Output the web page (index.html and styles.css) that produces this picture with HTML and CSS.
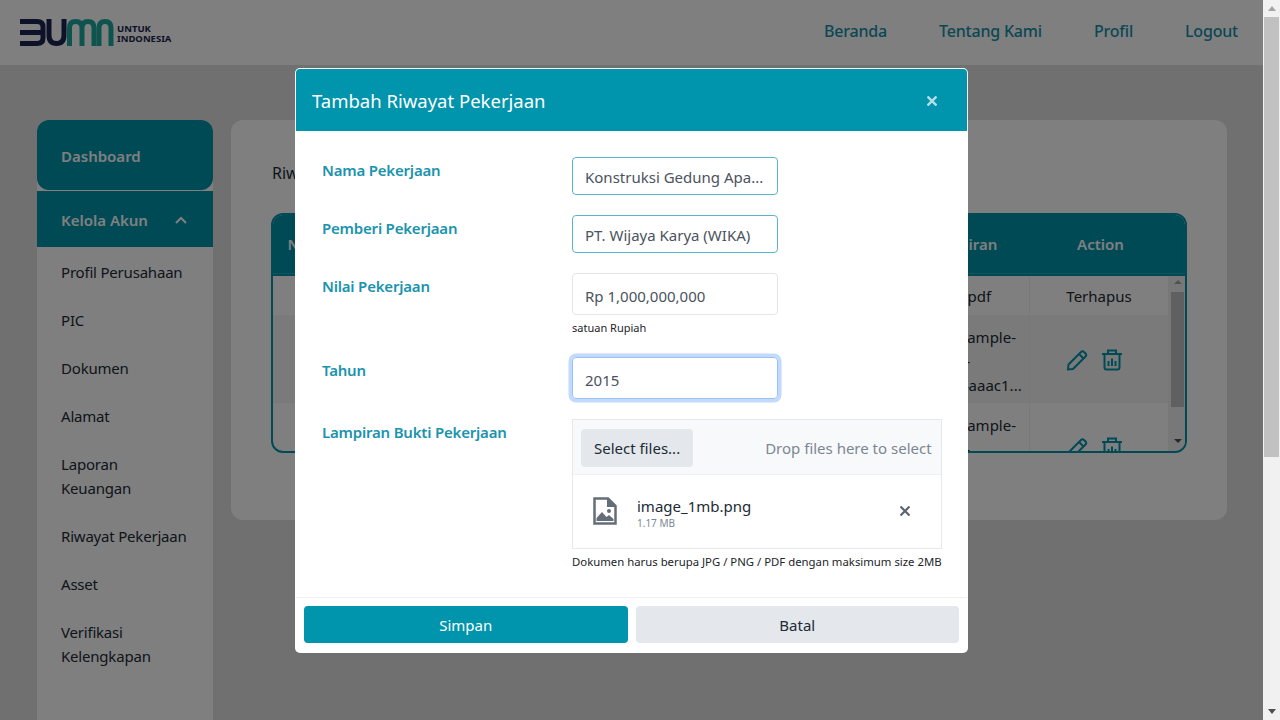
FILE: index.html
```html
<!DOCTYPE html>
<html lang="id">

<head>
    <meta charset="UTF-8">
    <title>Riwayat Pekerjaan</title>
    <link rel="stylesheet" href="styles.css">
</head>

<body>
    <div class="screen">
        <nav class="navbar">
            <svg class="logo-mark" width="94" height="28" viewBox="20 18 94 28" fill="none" stroke-width="5">
                <path stroke="#1a2550" d="M20 20.5H37Q43 20.5 43 26V37Q43 42.5 37 42.5H20M20 31.5H43" />
                <path stroke="#1a2550" d="M49 18V34Q49 42.5 56.500 42.500Q64 42.500 64 34V18" />
                <path stroke="#1fa79f" d="M69.500 45V27Q69.500 20.500 75.500 20.500Q82 20.500 82 27V45M82 27Q82 20.500 88 20.500Q94 20.500 94 27V45" />
                <path stroke="#1fa79f" d="M99 45V27Q99 20.500 105 20.500Q111 20.500 111 27V45" />
            </svg>
            <div class="logo-text">UNTUK<br>INDONESIA</div>
            <div class="nav-links">
                <a href="#">Beranda</a>
                <a href="#">Tentang Kami</a>
                <a href="#">Profil</a>
                <a href="#">Logout</a>
            </div>
        </nav>

        <main class="content">
            <aside class="sidebar">
                <div class="side-dash">Dashboard</div>
                <div class="side-group">
                    Kelola Akun
                    <svg width="12" height="8" viewBox="0 0 12 8" fill="none" stroke="#ffffff" stroke-width="2">
                        <path d="M1 7L6 2L11 7" />
                    </svg>
                </div>
                <a class="side-item" href="#">Profil Perusahaan</a>
                <a class="side-item" href="#">PIC</a>
                <a class="side-item" href="#">Dokumen</a>
                <a class="side-item" href="#">Alamat</a>
                <a class="side-item" href="#">Laporan Keuangan</a>
                <a class="side-item" href="#">Riwayat Pekerjaan</a>
                <a class="side-item" href="#">Asset</a>
                <a class="side-item" href="#">Verifikasi Kelengkapan</a>
            </aside>

            <section class="card">
                <h4 class="card-title">Riwayat Pekerjaan</h4>
                <div class="table-box">
                    <div class="tbl-row tbl-head">
                        <div>No</div>
                        <div>Nama Pekerjaan</div>
                        <div>Pemberi Pekerjaan</div>
                        <div>Nilai</div>
                        <div>Tahun</div>
                        <div>Lampiran</div>
                        <div>Action</div>
                    </div>
                    <div class="tbl-body">
                        <div class="tbl-rows">
                            <div class="tbl-row">
                                <div class="cell-no">1</div>
                                <div>Konstruksi</div>
                                <div>PT. Wijaya Karya</div>
                                <div>1,000,000</div>
                                <div>2015</div>
                                <div class="cell-file cell-file-sm">1.pdf</div>
                                <div class="cell-action">Terhapus</div>
                            </div>
                            <div class="tbl-row tbl-row-alt">
                                <div class="cell-no">2</div>
                                <div>Konstruksi</div>
                                <div>PT. Wijaya Karya</div>
                                <div>1,000,000</div>
                                <div>2016</div>
                                <div class="cell-file">sample-<br>f-<br>4aaac1...</div>
                                <div class="cell-action cell-icons">
                                    <svg width="22" height="22" viewBox="0 0 22 22" fill="none" stroke="#0094ad" stroke-width="2">
                                        <path d="M2 20.500L2.500 15.500L15 3Q16.500 1.500 18 3L19.500 4.500Q21 6 19.500 7.500L7 20Z" />
                                        <path d="M13 5L17.500 9.500" />
                                    </svg>
                                    <svg width="22" height="22" viewBox="0 0 22 22" fill="none" stroke="#0094ad" stroke-width="2">
                                        <path d="M1 5H21M7 5V1.500H15V5M3.500 5V18.500Q3.500 20.500 5.500 20.500H16.500Q18.500 20.500 18.500 18.500V5" />
                                        <path d="M7.500 12V17M11 9.500V17M14.500 12V17" />
                                    </svg>
                                </div>
                            </div>
                            <div class="tbl-row">
                                <div class="cell-no">3</div>
                                <div>Konstruksi</div>
                                <div>PT. Wijaya Karya</div>
                                <div>1,000,000</div>
                                <div>2017</div>
                                <div class="cell-file">sample-<br>f-<br>4aaac1...</div>
                                <div class="cell-action cell-icons">
                                    <svg width="22" height="22" viewBox="0 0 22 22" fill="none" stroke="#0094ad" stroke-width="2">
                                        <path d="M2 20.500L2.500 15.500L15 3Q16.500 1.500 18 3L19.500 4.500Q21 6 19.500 7.500L7 20Z" />
                                        <path d="M13 5L17.500 9.500" />
                                    </svg>
                                    <svg width="22" height="22" viewBox="0 0 22 22" fill="none" stroke="#0094ad" stroke-width="2">
                                        <path d="M1 5H21M7 5V1.500H15V5M3.500 5V18.500Q3.500 20.500 5.500 20.500H16.500Q18.500 20.500 18.500 18.500V5" />
                                        <path d="M7.500 12V17M11 9.500V17M14.500 12V17" />
                                    </svg>
                                </div>
                            </div>
                        </div>
                        <div class="tbl-scroll">
                            <span class="arrow-up"></span>
                            <span class="tbl-thumb"></span>
                            <span class="arrow-down"></span>
                        </div>
                    </div>
                </div>
            </section>
        </main>

        <div class="backdrop"></div>

        <div class="modal">
            <header class="modal-head">
                <span class="modal-title">Tambah Riwayat Pekerjaan</span>
                <svg class="modal-close" width="10" height="10" viewBox="0 0 10 10" stroke="#ffffff" stroke-width="2.400">
                    <path d="M0.500 0.500L9.500 9.500M9.500 0.500L0.500 9.500" />
                </svg>
            </header>

            <form class="modal-body">
                <div class="form-row row-name">
                    <label>Nama Pekerjaan</label>
                    <div class="field">
                        <div class="input input-ok">Konstruksi Gedung Apa...</div>
                    </div>
                </div>
                <div class="form-row row-giver">
                    <label>Pemberi Pekerjaan</label>
                    <div class="field">
                        <div class="input input-ok">PT. Wijaya Karya (WIKA)</div>
                    </div>
                </div>
                <div class="form-row row-value">
                    <label>Nilai Pekerjaan</label>
                    <div class="field">
                        <div class="input input-tall">Rp 1,000,000,000</div>
                        <small class="hint">satuan Rupiah</small>
                    </div>
                </div>
                <div class="form-row row-year">
                    <label>Tahun</label>
                    <div class="field">
                        <div class="input input-tall input-focus">2015</div>
                    </div>
                </div>
                <div class="form-row">
                    <label>Lampiran Bukti Pekerjaan</label>
                    <div class="field field-wide">
                        <div class="upload">
                            <div class="upload-bar">
                                <span class="upload-btn">Select files...</span>
                                <span class="upload-drop">Drop files here to select</span>
                            </div>
                            <div class="upload-file">
                                <svg class="file-icon" width="24" height="28" viewBox="0 0 24 28">
                                    <path fill="none" stroke="#656d78" stroke-width="2.500" d="M1.500 1.500H15L22.500 9V26.500H1.500Z" />
                                    <path fill="#656d78" d="M14 1.500H16L23 8.500V10H14Z" />
                                    <circle fill="#656d78" cx="16" cy="14" r="2" />
                                    <path fill="#656d78" d="M3.500 24V21L9 15L13.500 20L16 18L20.500 22V24Z" />
                                </svg>
                                <div class="file-info">
                                    <div class="file-name">image_1mb.png</div>
                                    <div class="file-size">1.17 MB</div>
                                </div>
                                <svg class="file-remove" width="10" height="10" viewBox="0 0 10 10" stroke="#5c6570" stroke-width="2.200">
                                    <path d="M0.500 0.500L9.500 9.500M9.500 0.500L0.500 9.500" />
                                </svg>
                            </div>
                        </div>
                        <small class="hint hint-wide">Dokumen harus berupa JPG / PNG / PDF dengan maksimum size 2MB</small>
                    </div>
                </div>
            </form>

            <footer class="modal-foot">
                <button type="button" class="btn btn-save">Simpan</button>
                <button type="button" class="btn btn-cancel">Batal</button>
            </footer>
        </div>
    </div>

    <div class="page-scroll">
        <span class="page-up"></span>
        <span class="page-thumb"></span>
        <span class="page-down"></span>
    </div>
</body>

</html>
```

FILE: styles.css
```css
* {
    box-sizing: border-box;
}

body {
    display: flex;
    margin: 0;
    height: 720px;
    overflow: hidden;
    font-family: "Noto Sans", "Open Sans", sans-serif;
    font-size: 15px;
    line-height: 24px;
    color: #212b36;
}

a {
    color: inherit;
    text-decoration: none;
}

.screen {
    position: relative;
    width: 1263px;
    height: 720px;
    overflow: hidden;
    background: #e0e0e0;
}

/* navbar */
.navbar {
    display: flex;
    align-items: center;
    height: 65px;
    padding: 0 25px 0 20px;
    background: #ffffff;
}

.logo-text {
    margin-left: 3px;
    margin-top: 2px;
    font-size: 9.500px;
    font-weight: 700;
    line-height: 9.500px;
    color: #1a2550;
}

.nav-links {
    display: flex;
    gap: 52px;
    margin-left: auto;
    margin-bottom: 4px;
    font-size: 16px;
    font-weight: 500;
    letter-spacing: -0.2px;
    color: #168fa8;
}

/* sidebar + card */
.content {
    display: flex;
    align-items: flex-start;
    gap: 18px;
    padding: 55px 0 0 37px;
}

.sidebar {
    width: 176px;
    height: 640px;
    background: #ffffff;
    border-radius: 12px 12px 0 0;
}

.side-dash {
    height: 70px;
    padding: 24px 24px 0;
    border-radius: 12px;
    background: #0094ad;
    color: #ffffff;
    font-weight: 600;
}

.side-group {
    display: flex;
    align-items: center;
    justify-content: space-between;
    height: 56px;
    margin-top: 1px;
    padding: 2px 26px 0 24px;
    background: #0094ad;
    color: #ffffff;
    font-weight: 600;
}

.side-item {
    display: block;
    padding: 13px 24px 11px;
    letter-spacing: -0.2px;
}

.card {
    width: 996px;
    height: 400px;
    padding: 40px;
    border-radius: 12px;
    background: #ffffff;
}

.card-title {
    margin: 0 0 27px 1px;
    font-size: 16px;
    font-weight: 400;
    line-height: 26px;
}

/* table */
.table-box {
    height: 240px;
    overflow: hidden;
    border: 2px solid #0094ad;
    border-radius: 12px;
}

.tbl-row {
    display: grid;
    grid-template-columns: 50px 200px 180px 100px 93px 133px 139px;
}

.tbl-row>div {
    padding: 8px 10px 7px;
}

.tbl-row .cell-no {
    padding-left: 30px;
}

.tbl-head {
    grid-template-columns: 50px 200px 180px 100px 93px 133px 143px;
    height: 59px;
    border-bottom: 1px solid #22a4ba;
    background: #0094ad;
    color: #ffffff;
    font-weight: 600;
    text-align: center;
}

.tbl-row.tbl-head>div {
    padding-top: 17px;
}

.tbl-body {
    display: flex;
    border-top: 2px solid #0094ad;
    height: 177px;
    overflow: hidden;
}

.tbl-rows {
    width: 895px;
}

.tbl-row-alt {
    background: #f5f5f5;
}

.tbl-row .cell-file {
    padding: 10px 0 6px 64px;
    overflow: hidden;
}

.tbl-row .cell-file-sm {
    padding: 8px 0 7px 59px;
}

.tbl-row .cell-action {
    display: flex;
    align-items: center;
    justify-content: center;
    gap: 13px;
    border-left: 1px solid #f0f0f0;
}

.tbl-row .cell-icons {
    padding-right: 19px;
}

.tbl-scroll {
    display: flex;
    flex-direction: column;
    align-items: center;
    justify-content: space-between;
    width: 17px;
    padding: 4px 0 8px 2px;
    background: #f1f1f1;
}

.tbl-thumb {
    width: 13px;
    height: 115px;
    margin-top: -1px;
    margin-bottom: 24px;
    background: #c1c1c1;
}

.arrow-up,
.arrow-down {
    width: 0;
    height: 0;
    border-left: 4px solid transparent;
    border-right: 4px solid transparent;
}

.arrow-up {
    border-bottom: 4px solid #a3a3a3;
}

.arrow-down {
    border-top: 4px solid #505050;
}

/* modal */
.backdrop {
    position: absolute;
    inset: 0;
    background: rgba(0, 0, 0, 0.5);
}

.modal {
    position: absolute;
    top: 68px;
    left: 295px;
    width: 673px;
    height: 585px;
    overflow: hidden;
    border: 1px solid rgba(255, 255, 255, 0.7);
    border-radius: 5px;
    background: #ffffff;
}

.modal-head {
    display: flex;
    align-items: center;
    justify-content: space-between;
    height: 62px;
    padding: 2px 30px 0 16px;
    background: #0094ad;
    color: #ffffff;
}

.modal-title {
    font-size: 18.500px;
    font-weight: 400;
}

.modal-close {
    opacity: 0.7;
}

.modal-body {
    height: 466px;
    padding: 26px 26px 0;
}

.form-row {
    display: flex;
}

.form-row label {
    width: 250px;
    flex: none;
    padding-top: 1px;
    color: #1a93ad;
    font-weight: 600;
    letter-spacing: -0.2px;
}

.field {
    width: 206px;
}

.field-wide {
    width: 370px;
}

.row-name {
    margin-bottom: 20px;
}

.row-giver {
    margin-bottom: 20px;
}

.row-value {
    margin-bottom: 21px;
}

.row-year {
    margin-bottom: 20px;
}

.input {
    height: 38px;
    padding: 7px 12px;
    border: 1px solid #58b7c7;
    border-radius: 4px;
    color: #4a5360;
    white-space: nowrap;
}

.input-tall {
    height: 42px;
    padding: 10px 12px 8px;
    border-color: #e2e6ea;
}

.input-focus {
    border-color: #9bc0f5;
    box-shadow: 0 0 0 3.500px #c2dafc;
}

.hint {
    display: block;
    color: #212529;
    font-size: 11px;
    line-height: 16px;
    margin-top: 5px;
    white-space: nowrap;
}

.hint-wide {
    font-size: 11.350px;
}

/* upload widget */
.upload {
    height: 130px;
    border: 1px solid #e6e8eb;
}

.upload-bar {
    display: flex;
    align-items: center;
    justify-content: space-between;
    height: 55px;
    padding: 2px 9px 0 8px;
    border-bottom: 1px solid #eff0f2;
    background: #f8f9fa;
}

.upload-btn {
    padding: 7px 13px;
    border-radius: 4px;
    background: #e4e7eb;
}

.upload-drop {
    color: #7b8794;
}

.upload-file {
    display: flex;
    align-items: center;
    height: 73px;
    padding: 0 31px 2px 20px;
}

.file-info {
    margin-left: 20px;
    padding-top: 4px;
}

.file-name {
    line-height: 20px;
}

.file-size {
    color: #7b8794;
    font-size: 10px;
    line-height: 14px;
}

.file-remove {
    margin-left: auto;
}

/* footer */
.modal-foot {
    display: flex;
    gap: 8px;
    padding: 8px;
    border-top: 1px solid #eff0f2;
}

.btn {
    flex: 1;
    height: 37px;
    border: 0;
    border-radius: 4px;
    font: inherit;
}

.btn-save {
    background: #0094ad;
    color: #ffffff;
}

.btn-cancel {
    background: #e4e7eb;
    color: #212b36;
}

/* window scrollbar */
.page-scroll {
    display: flex;
    flex-direction: column;
    align-items: center;
    width: 17px;
    height: 720px;
    background: #f1f1f1;
}

.page-up {
    width: 0;
    height: 0;
    margin: 6px 0 6px;
    border-left: 4px solid transparent;
    border-right: 4px solid transparent;
    border-bottom: 5px solid #a3a3a3;
}

.page-thumb {
    width: 15px;
    height: 440px;
    background: #c1c1c1;
}

.page-down {
    width: 0;
    height: 0;
    margin-top: auto;
    margin-bottom: 6px;
    border-left: 4px solid transparent;
    border-right: 4px solid transparent;
    border-top: 5px solid #505050;
}
```
